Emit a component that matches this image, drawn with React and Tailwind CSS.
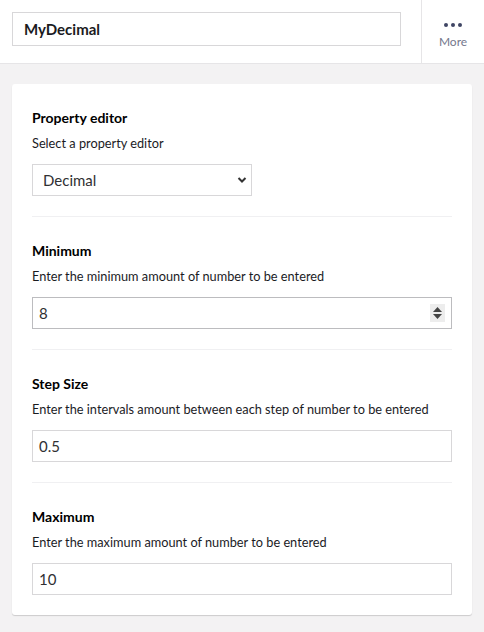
import React from 'react';

const sections = [
  { label: 'Minimum', desc: 'Enter the minimum amount of number to be entered', value: '8', spinner: true },
  { label: 'Step Size', desc: 'Enter the intervals amount between each step of number to be entered', value: '0.5' },
  { label: 'Maximum', desc: 'Enter the maximum amount of number to be entered', value: '10' },
];

function Section({ label, desc, last, children }) {
  return (
    <div className={`pt-6 pb-5 ${last ? '' : 'border-b border-[#f0f0f2]'}`}>
      <div className="text-[14px] leading-5 font-bold text-[#000]">{label}</div>
      <div className="mt-[5px] text-[12.75px] leading-5 text-[#1b1b1f]">{desc}</div>
      <div className="mt-[11px]">{children}</div>
    </div>
  );
}

export default function App() {
  return (
    <div className="w-[484px] h-[632px] bg-[#f3f2f3] font-['Lato',sans-serif] text-[#303033]">
      {/* Header */}
      <header className="h-[64px] bg-white border-b border-[#e6e5e7] flex">
        <div className="flex-1 pl-3 pr-5 pt-3">
          <input
            readOnly
            value="MyDecimal"
            className="w-full h-[34px] border border-[#d8d7d9] px-[11px] text-[15px] font-bold text-[#1b1b1f] outline-none"
          />
        </div>
        <div className="w-[63px] border-l border-[#e6e5e7] flex flex-col items-center pt-[23px]">
          <div className="flex gap-[3px]">
            <span className="w-[4px] h-[4px] rounded-full bg-[#3f4564]" />
            <span className="w-[4px] h-[4px] rounded-full bg-[#3f4564]" />
            <span className="w-[4px] h-[4px] rounded-full bg-[#3f4564]" />
          </div>
          <div className="mt-[7px] text-[12px] leading-4 text-[#74778c]">More</div>
        </div>
      </header>

      {/* Content */}
      <main className="px-3 pt-5">
        <div className="bg-white rounded-[3px] shadow-[0_1px_1px_rgba(0,0,0,0.16)] px-5">
          <Section label="Property editor" desc="Select a property editor">
            <div className="relative w-[220px] h-[32px] border border-[#d8d7d9] flex items-center pl-[10px]">
              <span className="text-[15px] text-[#303033]">Decimal</span>
              <svg className="absolute right-[4px] top-[11px]" width="10" height="8" viewBox="0 0 10 8">
                <path d="M1.5 2 L5 5.5 L8.5 2" fill="none" stroke="#333" strokeWidth="2" />
              </svg>
            </div>
          </Section>
          {sections.map((s, i) => (
            <Section key={s.label} label={s.label} desc={s.desc} last={i === sections.length - 1}>
              <div
                className={`relative w-full h-[32px] border flex items-center pl-[6px] ${
                  s.spinner ? 'border-[#bcbcbf]' : 'border-[#d8d7d9]'
                }`}
              >
                <span className="text-[15px] text-[#303033]">{s.value}</span>
                {s.spinner && (
                  <div className="absolute right-[6px] top-[6px] w-[15px] h-[18px] bg-[#ededed] flex flex-col items-center justify-center gap-[2px]">
                    <svg width="9" height="5" viewBox="0 0 9 5">
                      <path d="M4.5 0 L9 5 L0 5 Z" fill="#444" />
                    </svg>
                    <svg width="9" height="5" viewBox="0 0 9 5">
                      <path d="M0 0 L9 0 L4.5 5 Z" fill="#444" />
                    </svg>
                  </div>
                )}
              </div>
            </Section>
          ))}
        </div>
      </main>
    </div>
  );
}
